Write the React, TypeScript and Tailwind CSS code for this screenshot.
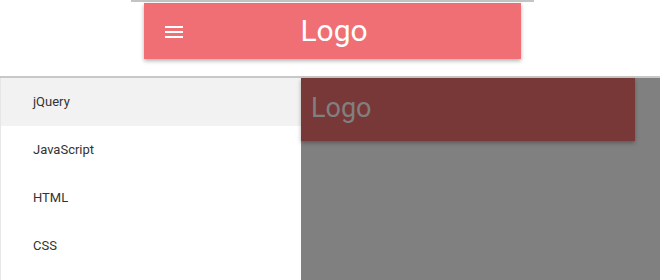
import { ReactNode } from "react";

const items = ["jQuery", "JavaScript", "HTML", "CSS"];

function MenuIcon() {
  return (
    <svg width="24" height="24" viewBox="0 0 24 24" className="text-white">
      <path d="M3 18h18v-2H3v2zm0-5h18v-2H3v2zm0-7v2h18V6H3z" fill="currentColor" />
    </svg>
  );
}

function Frame({ children }: { children: ReactNode }) {
  return <div className="border-t-2 border-[#c4c4c4]">{children}</div>;
}

export default function App() {
  return (
    <div
      className="w-[660px] h-[280px] overflow-hidden bg-white"
      style={{ fontFamily: "Roboto, 'Liberation Sans', sans-serif" }}
    >
      {/* closed state */}
      <div className="h-[76px] flex justify-center pl-[4px]">
        <div className="w-[403px]">
          <Frame>
            <div className="mx-[13px] mt-px h-[56px] bg-[#f06f74] shadow-[0_2px_4px_rgba(0,0,0,0.3)] flex items-center relative">
              <div className="pl-[18px] pt-[2px] flex">
                <MenuIcon />
              </div>
              <div className="absolute inset-0 flex items-center justify-center text-white text-[30px] pb-[2px] pl-[4px]">
                Logo
              </div>
            </div>
          </Frame>
        </div>
      </div>

      {/* open state */}
      <div className="border-t-2 border-[#c8c8c8] flex h-[204px]">
        <div className="w-[301px] bg-white border-l border-[#e6e6e6] flex flex-col">
          {items.map((item, i) => (
            <div
              key={item}
              className={
                "h-[48px] flex items-center pl-[32px] text-[13px] text-[#333]" +
                (i === 0 ? " bg-[#f2f2f2]" : "")
              }
            >
              {item}
            </div>
          ))}
        </div>
        <div className="flex-1 bg-[#808080]">
          <div className="w-[334px] h-[63px] bg-[#793838] shadow-[0_2px_4px_rgba(0,0,0,0.3)] flex items-center pl-[10px] pb-[2px] text-[#808080] text-[27px]">
            Logo
          </div>
        </div>
      </div>
    </div>
  );
}
